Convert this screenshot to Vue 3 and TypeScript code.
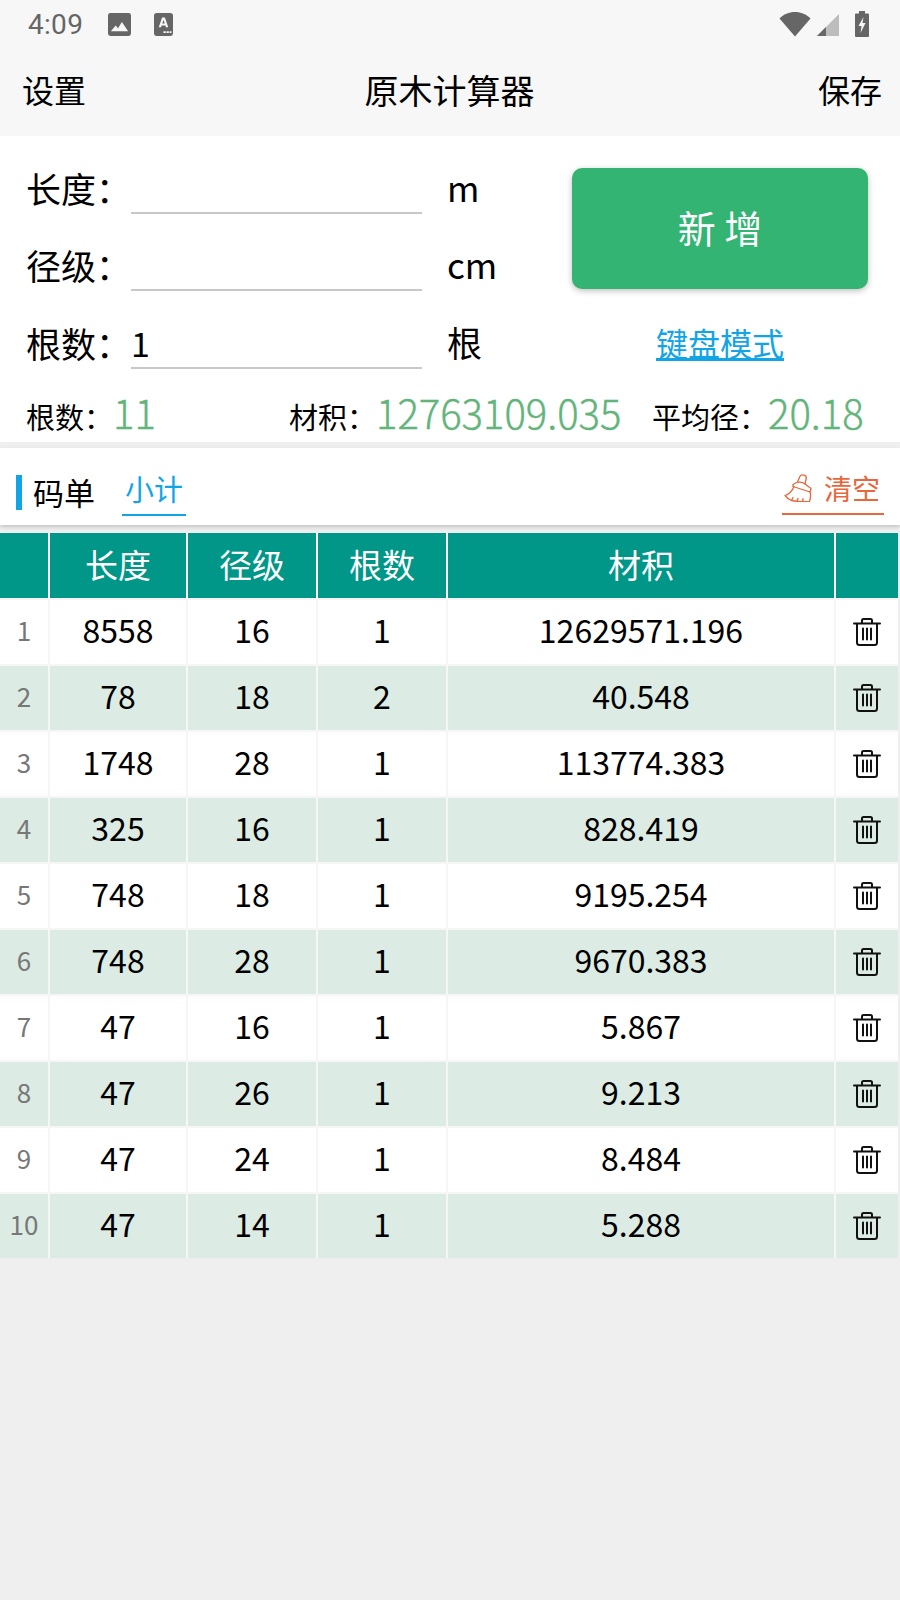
<script setup lang="ts">
interface Row {
  length: number;
  diameter: number;
  count: number;
  volume: string;
}

const rows: Row[] = [
  { length: 8558, diameter: 16, count: 1, volume: "12629571.196" },
  { length: 78, diameter: 18, count: 2, volume: "40.548" },
  { length: 1748, diameter: 28, count: 1, volume: "113774.383" },
  { length: 325, diameter: 16, count: 1, volume: "828.419" },
  { length: 748, diameter: 18, count: 1, volume: "9195.254" },
  { length: 748, diameter: 28, count: 1, volume: "9670.383" },
  { length: 47, diameter: 16, count: 1, volume: "5.867" },
  { length: 47, diameter: 26, count: 1, volume: "9.213" },
  { length: 47, diameter: 24, count: 1, volume: "8.484" },
  { length: 47, diameter: 14, count: 1, volume: "5.288" },
];
</script>

<template>
  <div class="page">
    <header class="top">
      <div class="status">
        <span class="time">4:09</span>
        <svg class="ic-photo" viewBox="0 0 24 24"><path fill="#666" d="M2.5 0h19A2.5 2.5 0 0 1 24 2.500v19a2.500 2.500 0 0 1-2.500 2.500h-19A2.500 2.500 0 0 1 0 21.500v-19A2.500 2.500 0 0 1 2.500 0z" /><path fill="#f7f7f7" d="M3 19l5-6 2.500 3 4-6.500L21 19z" /></svg>
        <svg class="ic-note" viewBox="0 0 20 24"><rect width="20" height="24" rx="3" fill="#666" /><path fill="#f7f7f7" d="M8.500 4.500h3L15 15h-2.400l-.6-2H8l-.6 2H5zm1.500 2.800L8.700 11h2.600z" /><path fill="#f7f7f7" d="M10 19h2.400v2H10zm3.200 0h2.400v2h-2.400zm3.200 0h2v2h-2z" /></svg>
        <span class="spacer"></span>
        <svg class="ic-wifi" viewBox="0 0 32 26"><path fill="#666" d="M16 25.500 0.500 7.500C4.500 3.200 10 1 16 1s11.500 2.200 15.500 6.500z" /></svg>
        <svg class="ic-signal" viewBox="0 0 22 22"><path fill="#bdbdbd" d="M22 0v22H0z" /><path fill="#666" d="M9 13v9H0z" /></svg>
        <svg class="ic-battery" viewBox="0 0 14 26"><path fill="#666" d="M4 0h6v2.500h3a1 1 0 0 1 1 1V25a1 1 0 0 1-1 1H1a1 1 0 0 1-1-1V3.500a1 1 0 0 1 1-1h3z" /><path fill="#f7f7f7" d="M8.500 6 3.500 15h3l-1 7 5-10H7.500z" /></svg>
      </div>
      <nav class="nav">
        <span>设置</span>
        <span class="title">原木计算器</span>
        <span>保存</span>
      </nav>
    </header>

    <section class="entry">
      <div class="form">
        <div class="fields">
          <div class="field">
            <label>长度：</label><div class="line"></div><span class="unit">m</span>
          </div>
          <div class="field">
            <label>径级：</label><div class="line"></div><span class="unit">cm</span>
          </div>
          <div class="field">
            <label>根数：</label><div class="line">1</div><span class="unit">根</span>
          </div>
        </div>
        <div class="actions">
          <button class="add">新 增</button>
          <a class="mode">键盘模式</a>
        </div>
      </div>
      <div class="stats">
        <div class="stat s1"><span>根数：</span><b>11</b></div>
        <div class="stat s2"><span>材积：</span><b>12763109.035</b></div>
        <div class="stat s3"><span>平均径：</span><b>20.18</b></div>
      </div>
    </section>

    <section class="tabs">
      <span class="mark"></span>
      <span class="tab">码单</span>
      <span class="tab active">小计</span>
      <span class="spacer"></span>
      <a class="clear">
        <svg viewBox="0 0 28 28" fill="none" stroke="#e8673c" stroke-width="1.300" stroke-linejoin="round" stroke-linecap="round">
          <path d="M13.500 8 16 2.200C17 0 22.800 1 22.300 4L21 10" />
          <path d="M9 10.500C13 7.500 18 7.500 21 10L27 14.500 26 18 9 12.500z" />
          <path d="M10 12.500C8.500 16.500 5 20 1 21.500 2.500 23.500 5 25.500 7.500 26.500 13 27.500 20 28 25.500 27.500 26.500 24.500 27 21 26 18" />
          <path d="M7.500 26.500 9 23.500M13 27.300l1-3M18.500 27.700l.6-3" />
        </svg>
        <span>清空</span>
      </a>
    </section>

    <div class="grid head">
      <div class="cell"></div>
      <div class="cell">长度</div>
      <div class="cell">径级</div>
      <div class="cell">根数</div>
      <div class="cell">材积</div>
      <div class="cell"></div>
    </div>
    <div v-for="(row, i) in rows" :key="i" class="grid row" :class="{ alt: i % 2 === 1 }">
      <div class="cell idx">{{ i + 1 }}</div>
      <div class="cell">{{ row.length }}</div>
      <div class="cell">{{ row.diameter }}</div>
      <div class="cell">{{ row.count }}</div>
      <div class="cell">{{ row.volume }}</div>
      <div class="cell act">
        <svg class="trash" viewBox="0 0 30 30" fill="none" stroke="#111" stroke-width="2" stroke-linecap="round" stroke-linejoin="round">
          <path d="M2 6.500h26" />
          <path d="M10 6V3.500A1.500 1.500 0 0 1 11.500 2h7A1.500 1.500 0 0 1 20 3.500V6" />
          <path d="M5 7v18.500A2.500 2.500 0 0 0 7.500 28h15a2.500 2.500 0 0 0 2.500-2.500V7" />
          <path d="M11 11.500v11M15 11.500v11M19 11.500v11" />
        </svg>
      </div>
    </div>
  </div>
</template>

<style>
html,
body {
  background: #efefef;
}
</style>

<style scoped>
.page {
  width: 900px;
  min-height: 1600px;
  background: #efefef;
  font-family: "Noto Sans CJK SC", "Noto Sans", sans-serif;
  color: #000;
}

.top {
  height: 136px;
  background: #f7f7f7;
}

.status {
  display: flex;
  align-items: center;
  height: 48px;
  padding: 0 31px 0 28px;
}

.time {
  font-family: Roboto, sans-serif;
  font-size: 28px;
  letter-spacing: 0.3px;
  color: #666;
  margin-right: 25px;
}

.ic-photo {
  width: 23px;
  height: 23px;
  margin-right: 23px;
}

.ic-note {
  width: 19px;
  height: 23px;
}

.spacer {
  flex: 1;
}

.ic-wifi {
  width: 32px;
  height: 26px;
  margin-right: 6px;
}

.ic-signal {
  width: 22px;
  height: 22px;
  margin: 2px 16px 0 0;
}

.ic-battery {
  width: 14px;
  height: 26px;
}

.nav {
  display: flex;
  justify-content: space-between;
  align-items: center;
  height: 82px;
  padding: 0 18px 0 22px;
  font-size: 32px;
}

.title {
  font-size: 34px;
  margin-left: -5px;
}

.entry {
  height: 306px;
  background: #fff;
  padding: 0 32px 0 26px;
}

.form {
  display: flex;
  height: 247px;
}

.fields {
  padding-top: 0;
}

.field {
  display: flex;
  align-items: flex-end;
  height: 77.5px;
  font-size: 35px;
}

.field label {
  width: 105px;
  line-height: 53px;
  white-space: nowrap;
}

.line {
  width: 291px;
  height: 48px;
  line-height: 44px;
  border-bottom: 2px solid #c8c8c8;
  box-sizing: border-box;
  font-size: 34px;
}

.unit {
  margin-left: 25px;
  line-height: 54px;
}

.actions {
  margin-left: auto;
  padding-top: 32px;
  display: flex;
  flex-direction: column;
  align-items: center;
  width: 296px;
}

.add {
  width: 296px;
  height: 121px;
  padding: 0 0 5px;
  border: 0;
  border-radius: 10px;
  background: #33b473;
  color: #fff;
  font-family: inherit;
  font-size: 38px;
  box-shadow: 0 2px 6px rgba(0, 0, 0, 0.25);
}

.mode {
  margin-top: 30px;
  font-size: 32px;
  line-height: 46px;
  color: #12a5e6;
  text-decoration: underline;
  text-decoration-thickness: 3px;
  text-underline-offset: 2px;
}

.stats {
  display: flex;
  align-items: baseline;
  height: 59px;
}

.stat span {
  font-size: 29px;
}

.stat b {
  font-weight: 300;
  font-size: 40px;
  color: #62b47a;
  -webkit-text-stroke: 0.4px #62b47a;
}

.s1 {
  width: 263px;
}

.s2 {
  width: 363px;
}

.tabs {
  display: flex;
  align-items: center;
  height: 77px;
  margin-top: 6px;
  padding: 0 16px;
  background: #fff;
  box-shadow: 0 2px 4px rgba(0, 0, 0, 0.18);
  position: relative;
}

.mark {
  width: 6px;
  height: 35px;
  margin-top: 12px;
  background: #12a5e6;
  margin-right: 11px;
}

.tab {
  font-size: 31px;
  margin-top: 10px;
}

.tab.active {
  margin: 9px 0 0 27px;
  padding: 0 3px 5px;
  width: 58px;
  color: #12a5e6;
  font-size: 29px;
  text-align: center;
  border-bottom: 2px solid #12a5e6;
}

.clear {
  display: flex;
  align-items: center;
  gap: 12px;
  width: 102px;
  margin-top: 9px;
  padding: 0 0 5px 2px;
  box-sizing: border-box;
  border-bottom: 2px solid #e8673c;
  color: #e8673c;
  font-size: 28px;
  white-space: nowrap;
}

.clear svg {
  width: 28px;
  height: 28px;
  flex: none;
}

.grid {
  display: grid;
  grid-template-columns: 48px 136px 128px 128px 386px 62px;
  gap: 0 2px;
  width: 898px;
}

.head {
  height: 65px;
  margin-top: 8px;
  background: #fff;
}

.head .cell {
  background: #009688;
  color: #fff;
  font-size: 33px;
  padding-bottom: 4px;
}

.row {
  height: 66px;
  background: #f6f6f6;
  padding-top: 2px;
  box-sizing: border-box;
}

.cell {
  display: flex;
  align-items: center;
  justify-content: center;
  padding-bottom: 6px;
  background: #fff;
  font-size: 32px;
}

.cell.act {
  padding-bottom: 0;
}

.alt .cell {
  background: #dcebe3;
}

.idx {
  font-size: 26px;
  color: #777;
}

.trash {
  width: 30px;
  height: 30px;
}
</style>
